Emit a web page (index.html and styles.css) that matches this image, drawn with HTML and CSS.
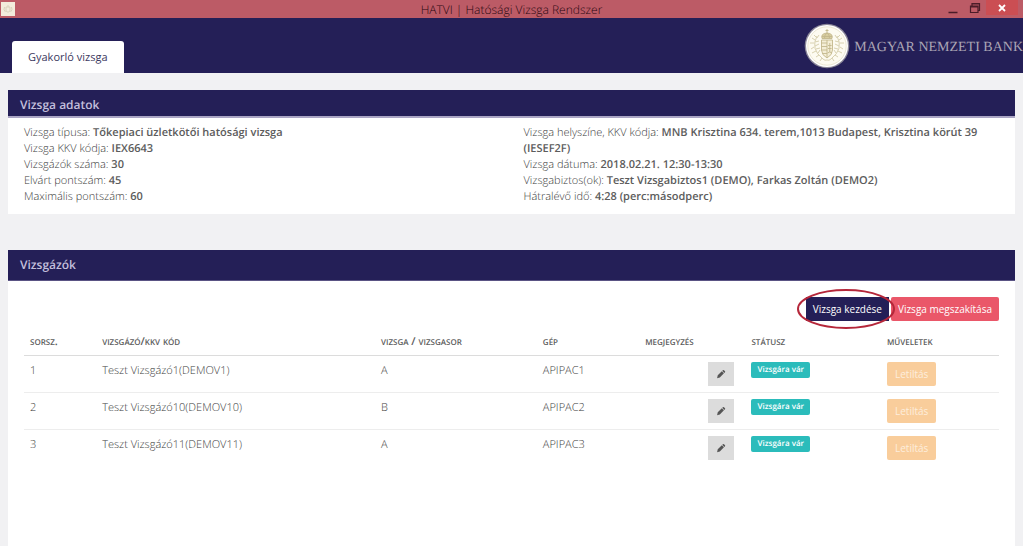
FILE: index.html
```html
<!DOCTYPE html>
<html lang="hu">
<head>
<meta charset="utf-8">
<meta name="viewport" content="width=device-width, initial-scale=1">
<title>HATVI | Hatósági Vizsga Rendszer</title>
<link rel="stylesheet" href="styles.css">
</head>
<body>
<svg class="symbols" aria-hidden="true">
  <symbol id="pencil" viewBox="0 0 12 12"><path d="M1.300 11l.8-3.400L7 2.700l2.500 2.500-4.900 4.900zM7.500 2.200l.8-.8q.7-.5 1.300 0l1.200 1.200q.5.600 0 1.300l-.8.800z"/></symbol>
</svg>
<div class="titlebar">
  <svg class="app-icon" viewBox="0 0 14 14" aria-hidden="true"><rect width="14" height="14" fill="#f3ecdc"/><path d="M5 5h4v4q-2 2.500-4 0zM7 3v2M3.500 5q-1.500 3 1 5M10.500 5q1.500 3-1 5" fill="none" stroke="#dad2bd"/></svg>
  <span class="title">HATVI | Hatósági Vizsga Rendszer</span>
  <div class="window-controls">
    <button class="win" aria-label="Kis méret"><svg viewBox="0 0 12 12"><path d="M1.500 10.500h9" stroke="#4a1c28" stroke-width="1.500"/></svg></button>
    <button class="win" aria-label="Előző méret"><svg viewBox="0 0 12 12"><path d="M1.500 4h7.500v6.500h-7.500zM1.500 5h7.500M3 3.500v-2h7.500v7H9.500M3 2h7.500" fill="none" stroke="#4a1c28" stroke-width="1.200"/></svg></button>
    <button class="win win-close" aria-label="Bezárás"><svg viewBox="0 0 12 12"><path d="M3 3l6 6M9 3l-6 6" stroke="#fff" stroke-width="1.800"/></svg></button>
  </div>
</div>
<header class="header">
  <nav><a class="tab" href="#">Gyakorló vizsga</a></nav>
  <div class="brand">
    <svg class="seal" viewBox="0 0 46 46" aria-hidden="true">
      <circle cx="23" cy="23" r="22.300" fill="#8b8797"/><circle cx="23" cy="23" r="21" fill="#fff"/><circle cx="23" cy="23" r="19.200" fill="#fdfbf1" stroke="#e2dcc1" stroke-width=".7"/>
      <g fill="none" stroke="#c3b88c" stroke-width=".9">
        <path d="M17.500 17h11v10q0 5-5.500 8-5.500-3-5.500-8z" fill="#f4eed6"/>
        <path d="M23 17v17.500M17.500 20H23M17.500 23.500H23M17.500 27H23M18.500 30.500H23M25.800 20v9M24 22.500h3.600M24 25.500h3.600M23.500 30q2.300-2 4.500 0"/>
        <path d="M18 15.500q-1.500-5 5-5.500 6.500.5 5 5.500zM18 13.500h10M20.500 15q0-4 2.500-5 2.500 1 2.500 5M23 10V6M21.500 7.500h3" fill="#d8cd9f"/>
      </g>
      <g fill="none" stroke="#d8d1b0" stroke-width="1">
        <path d="M13 13q-7 13 6 23 2 2 4 1M33 13q7 13-6 23-2 2-4 1"/>
        <path d="M12 14l-2-2M11 17l-3-2M10 20l-4 0M10 24l-3 2M12 28l-4 2M15 32l-3 2M18 35l-2 3M13 15l2-3M11 19l4-1M11 23l4-2M12 26l4-1M14 30l2-3M34 14l2-2M35 17l3-2M36 20h4M36 24l3 2M34 28l4 2M31 32l3 2M28 35l2 3M33 15l-2-3M35 19l-4-1M35 23l-4-2M34 26l-4-1M32 30l-2-3"/>
      </g>
    </svg>
    <span class="brand-name">MAGYAR NEMZETI BANK</span>
  </div>
</header>
<main class="content">
  <section class="panel">
    <h2 class="panel-title">Vizsga adatok</h2>
    <div class="details">
      <ul>
        <li>Vizsga típusa: <b>Tőkepiaci üzletkötői hatósági vizsga</b></li>
        <li>Vizsga KKV kódja: <b>IEX6643</b></li>
        <li>Vizsgázók száma: <b>30</b></li>
        <li>Elvárt pontszám: <b>45</b></li>
        <li>Maximális pontszám: <b>60</b></li>
      </ul>
      <ul>
        <li>Vizsga helyszíne, KKV kódja: <b>MNB Krisztina 634. terem,1013 Budapest, Krisztina körút 39 (IESEF2F)</b></li>
        <li>Vizsga dátuma: <b>2018.02.21. 12:30-13:30</b></li>
        <li>Vizsgabiztos(ok): <b>Teszt Vizsgabiztos1 (DEMO), Farkas Zoltán (DEMO2)</b></li>
        <li>Hátralévő idő: <b>4:28 (perc:másodperc)</b></li>
      </ul>
    </div>
  </section>
  <section class="panel panel-grow">
    <h2 class="panel-title panel-title-tall">Vizsgázók</h2>
    <div class="examinees">
      <div class="actions">
        <span class="marked">
          <button class="btn btn-start">Vizsga kezdése</button>
          <svg class="marker" viewBox="0 0 98 40" aria-hidden="true"><ellipse cx="49" cy="20" rx="48" ry="19"/></svg>
        </span>
        <button class="btn btn-stop">Vizsga megszakítása</button>
      </div>
      <table class="table">
        <colgroup><col class="c-num"><col class="c-name"><col class="c-exam"><col class="c-pc"><col class="c-note"><col class="c-status"><col class="c-ops"></colgroup>
        <thead><tr><th>sorsz.</th><th>vizsgázó/kkv kód</th><th>vizsga / vizsgasor</th><th>gép</th><th>megjegyzés</th><th>státusz</th><th>műveletek</th></tr></thead>
        <tbody>
          <tr><td>1</td><td>Teszt Vizsgázó1(DEMOV1)</td><td>A</td><td>APIPAC1</td><td class="note"><button class="edit" aria-label="Megjegyzés szerkesztése"><svg><use href="#pencil"/></svg></button></td><td><span class="badge">Vizsgára vár</span></td><td><button class="btn btn-block" disabled>Letiltás</button></td></tr>
          <tr><td>2</td><td>Teszt Vizsgázó10(DEMOV10)</td><td>B</td><td>APIPAC2</td><td class="note"><button class="edit" aria-label="Megjegyzés szerkesztése"><svg><use href="#pencil"/></svg></button></td><td><span class="badge">Vizsgára vár</span></td><td><button class="btn btn-block" disabled>Letiltás</button></td></tr>
          <tr><td>3</td><td>Teszt Vizsgázó11(DEMOV11)</td><td>A</td><td>APIPAC3</td><td class="note"><button class="edit" aria-label="Megjegyzés szerkesztése"><svg><use href="#pencil"/></svg></button></td><td><span class="badge">Vizsgára vár</span></td><td><button class="btn btn-block" disabled>Letiltás</button></td></tr>
        </tbody>
      </table>
    </div>
  </section>
</main>
</body>
</html>
```
FILE: styles.css
```css
* { box-sizing: border-box; }
body {
  margin: 0;
  min-height: 100vh;
  display: flex;
  flex-direction: column;
  background: #f1f1f3;
  color: #383838;
  font: 300 11px/16px "Open Sans", sans-serif;
  text-rendering: geometricPrecision;
}
b { color: #5c5c5c; font-weight: 600; }
button { font: inherit; border: 0; margin: 0; padding: 0; }
.symbols { display: none; }

.titlebar {
  display: grid;
  grid-template-columns: 1fr auto 1fr;
  height: 18px;
  background: #bc5b66;
}
.app-icon { width: 14px; height: 14px; margin: 2px 1px; }
.title { font-size: 12px; line-height: 20px; color: #2a0812; }
.window-controls { display: flex; justify-content: flex-end; padding-right: 5px; }
.win { width: 22px; height: 15px; background: none; display: grid; place-items: center; }
.win svg { width: 12px; height: 12px; }
.win-close { width: 32px; background: #cb4e53; }

.header {
  display: flex;
  justify-content: space-between;
  align-items: flex-end;
  height: 55px;
  padding-left: 12px;
  background: #241f57;
}
.tab {
  display: block;
  padding: 9px 16px 7px;
  border-radius: 3px 3px 0 0;
  background: #fff;
  color: #3c3960;
  font-weight: 500;
  text-decoration: none;
}
.brand { display: flex; align-items: center; gap: 4px; padding-bottom: 4px; }
.seal { width: 46px; height: 46px; }
.brand-name { padding-top: 3px; font: 14px/16px "Liberation Serif", serif; color: #aaa5b4; white-space: nowrap; }

.content { flex: 1; display: flex; flex-direction: column; gap: 36px; padding: 17px 8px 0; }
.panel { background: #fff; }
.panel-grow { flex: 1; }
.panel-title {
  margin: 0;
  padding: 6px 12px 3px;
  border-bottom: 2px solid #aaa5c4;
  background: #241f57;
  color: #c3bfdc;
  font-size: 12px;
  line-height: 17px;
  font-weight: 600;
}
.panel-title-tall { padding-bottom: 7px; border-bottom: 1px solid #5a5484; }
.details { display: grid; grid-template-columns: 1fr 1fr; column-gap: 24px; padding: 7px 16px 9px; }
.details ul { margin: 0; padding: 0; list-style: none; }

.examinees { padding: 16px; }
.actions { display: flex; justify-content: flex-end; gap: 2px; }
.marked { position: relative; display: flex; }
.marker { position: absolute; left: -9px; top: -8px; width: 98px; height: 40px; pointer-events: none; }
.marker ellipse { fill: none; stroke: #b5273a; stroke-width: 2; }
.btn { height: 24px; padding: 0 8px; border-radius: 2px; color: #fff; font-size: 10px; font-weight: 500; white-space: nowrap; }
.btn-start, .btn-stop { padding: 0 7px; }
.btn-start { background: #241f57; border-radius: 0; }
.btn-stop { background: #ea5769; }
.btn-block { background: #f9cd9b; color: #fdeedd; }

.table { width: 100%; margin-top: 8px; border-collapse: collapse; table-layout: fixed; }
.c-num { width: 7.4%; }
.c-name { width: 28.6%; }
.c-exam { width: 16.6%; }
.c-pc { width: 10.5%; }
.c-note { width: 10.9%; }
.c-status { width: 13.9%; }
.c-ops { width: 12.1%; }
.table th { padding: 5px 6px; text-align: left; font-size: 11px; line-height: 16px; font-weight: 600; color: #5c5c5c; font-variant: small-caps; border-bottom: 1px solid #dcdcdc; }
.table td { padding: 6px; line-height: 18px; vertical-align: top; border-bottom: 1px solid #ededed; }
.table tr:last-child td { border-bottom: 0; }
.table td > * { display: block; }
.note .edit { display: grid; place-items: center; width: 26px; height: 24px; margin: 0 5px 0 auto; background: #dcdcdc; }
.edit svg { width: 10px; height: 10px; fill: #555; }
.badge { width: fit-content; padding: 0 6px; border-radius: 2px; background: #2bbcbb; color: #fff; font-size: 8px; line-height: 16px; font-weight: 600; }
```
